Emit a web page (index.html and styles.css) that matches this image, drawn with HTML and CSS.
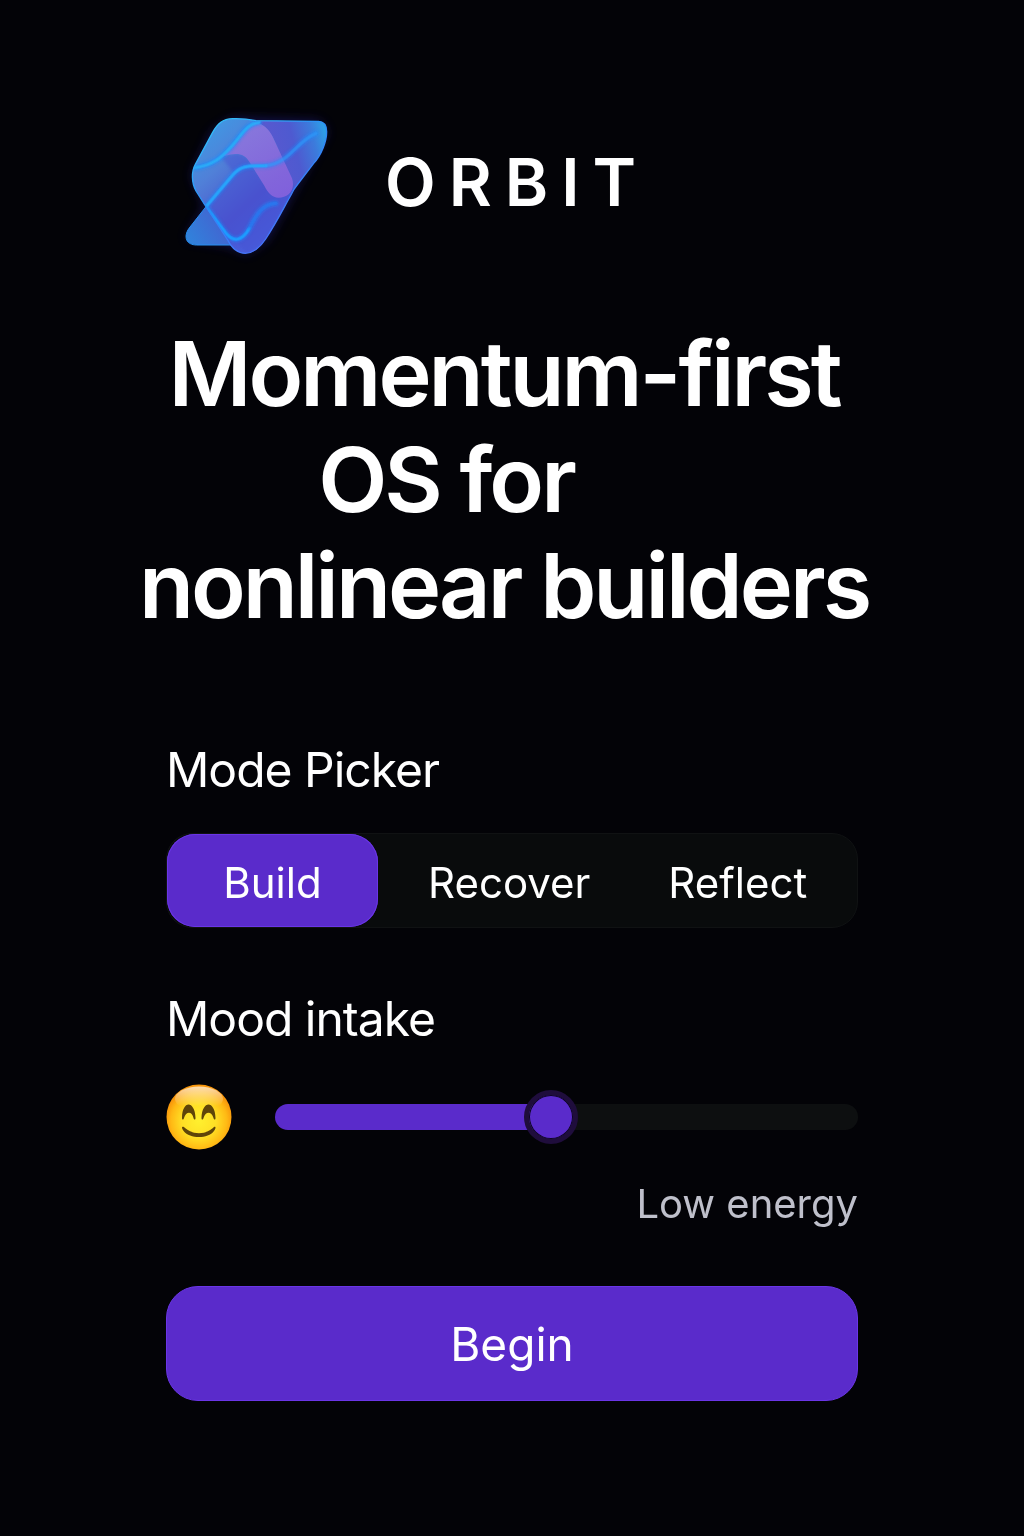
FILE: index.html
```html
<!DOCTYPE html>
<html lang="en">
<head>
<meta charset="utf-8">
<meta name="viewport" content="width=device-width, initial-scale=1">
<title>Orbit</title>
<link rel="stylesheet" href="styles.css">
</head>
<body>
<main class="page">
  <header class="brand">
    <svg class="brand-logo" viewBox="0 0 555 540" aria-hidden="true">
      <defs>
        <linearGradient id="body" x1="90" y1="90" x2="400" y2="440" gradientUnits="userSpaceOnUse">
          <stop offset="0" stop-color="#3c9ee6"/>
          <stop offset=".3" stop-color="#5080d8"/>
          <stop offset=".6" stop-color="#4c52cc"/>
          <stop offset="1" stop-color="#4568ea"/>
        </linearGradient>
        <linearGradient id="wing" x1="290" y1="180" x2="483" y2="130" gradientUnits="userSpaceOnUse">
          <stop offset="0" stop-color="#5b58cf"/>
          <stop offset=".5" stop-color="#4e5ad0"/>
          <stop offset=".8" stop-color="#3c7bdc"/>
          <stop offset="1" stop-color="#2d9fe8"/>
        </linearGradient>
        <linearGradient id="tail" x1="70" y1="450" x2="190" y2="380" gradientUnits="userSpaceOnUse">
          <stop offset="0" stop-color="#3083dc"/>
          <stop offset="1" stop-color="#4560cf"/>
        </linearGradient>
        <linearGradient id="fold" x1="230" y1="100" x2="350" y2="300" gradientUnits="userSpaceOnUse">
          <stop offset="0" stop-color="#8c76dc"/>
          <stop offset="1" stop-color="#8562dc"/>
        </linearGradient>
        <linearGradient id="rim" x1="90" y1="80" x2="340" y2="460" gradientUnits="userSpaceOnUse">
          <stop offset="0" stop-color="#35c9fa"/>
          <stop offset=".5" stop-color="#2b8cf8"/>
          <stop offset="1" stop-color="#4a70fa"/>
        </linearGradient>
        <filter id="halo" x="-30%" y="-30%" width="160%" height="160%"><feGaussianBlur stdDeviation="18"/></filter>
        <filter id="soft" x="-20%" y="-20%" width="140%" height="140%"><feGaussianBlur stdDeviation="4"/></filter>
        <filter id="line" x="-20%" y="-20%" width="140%" height="140%"><feGaussianBlur stdDeviation="2"/></filter>
        <clipPath id="outline">
          <path d="M200 71C170 72 155 85 140 112L88 208C76 230 76 262 90 288L120 335L185 435C200 465 222 475 238 475C266 474 284 455 299 432C333 380 355 335 375 300C382 283 388 276 398 264L443 205C466 180 482 140 482 110C482 90 474 80 458 79L270 77C245 72 225 70 200 71Z"/>
        </clipPath>
      </defs>
      <path d="M200 71L140 112L80 240L120 335L62 430L190 450L242 475L303 432L390 275L483 110L458 79Z" fill="#2b25b8" opacity=".45" filter="url(#halo)"/>
      <path d="M120 335L69 400C51 426 61 450 92 450L198 450Z" fill="url(#tail)" stroke="#268ff2" stroke-width="3"/>
      <g clip-path="url(#outline)">
        <rect width="555" height="540" fill="url(#body)"/>
        <path d="M265 60H500V230L385 280C382 265 335 150 320 125C306 102 290 82 265 84Z" fill="url(#wing)"/>
        <path d="M165 187C210 170 235 175 250 200L295 272C308 300 325 309 340 308L385 275L300 440L242 475L120 335L205 235Z" fill="#4653d2" opacity=".5" filter="url(#soft)"/>
        <path d="M265 84C290 82 310 105 320 125L378 250C390 285 365 308 338 308C318 308 305 292 295 272L250 200C235 175 210 170 165 187C205 160 235 105 265 84Z" fill="url(#fold)" opacity=".92"/>
        <g fill="none" stroke="#168cff" stroke-width="16" stroke-linecap="round" opacity=".7" filter="url(#soft)">
          <path d="M88 218C140 210 165 190 200 150C230 115 245 85 280 82"/>
          <path d="M120 335L200 240C230 205 260 215 300 212C370 205 390 140 450 115" opacity=".8"/>
          <path d="M120 335L180 415C205 445 230 435 250 400C270 360 290 325 330 325" opacity=".8"/>
        </g>
        <g fill="none" stroke-linecap="round" stroke-width="9" filter="url(#line)">
          <path d="M88 218C140 210 165 190 200 150C230 115 245 85 280 82" stroke="#2bb4f8" opacity=".75"/>
          <path d="M120 335L200 240C230 205 260 215 300 212" stroke="#28a5fb"/>
          <path d="M300 212C370 205 390 140 450 115" stroke="#349dfa" opacity=".5"/>
          <path d="M120 335L180 415C205 445 230 435 250 400" stroke="#1c9cff"/>
          <path d="M250 400C270 360 290 325 330 325" stroke="#267cf2" opacity=".5"/>
        </g>
      </g>
      <path d="M200 71C170 72 155 85 140 112L88 208C76 230 76 262 90 288L120 335L185 435C200 465 222 475 238 475C266 474 284 455 299 432C333 380 355 335 375 300C382 283 388 276 398 264L443 205C466 180 482 140 482 110C482 90 474 80 458 79L270 77C245 72 225 70 200 71Z" fill="none" stroke="url(#rim)" stroke-width="4"/>
    </svg>
    <span class="brand-name">ORBIT</span>
  </header>

  <h1 class="headline">
    <span class="headline-line">Momentum-first</span>
    <span class="headline-line headline-line-short">OS for</span>
    <span class="headline-line">nonlinear builders</span>
  </h1>

  <form class="intake">
    <fieldset class="mode">
      <legend class="label">Mode Picker</legend>
      <div class="segments">
        <label class="segment"><input class="segment-input" type="radio" name="mode" value="build" checked>Build</label>
        <label class="segment segment-middle"><input class="segment-input" type="radio" name="mode" value="recover">Recover</label>
        <label class="segment segment-last"><input class="segment-input" type="radio" name="mode" value="reflect">Reflect</label>
      </div>
    </fieldset>

    <div class="mood">
      <label class="label" for="mood">Mood intake</label>
      <div class="mood-row">
        <svg class="mood-face" viewBox="0 0 66 66" aria-hidden="true">
          <defs>
            <radialGradient id="face" cx="33" cy="37" r="34" gradientUnits="userSpaceOnUse">
              <stop offset="0" stop-color="#fff02e"/>
              <stop offset=".5" stop-color="#ffdf25"/>
              <stop offset=".82" stop-color="#ffb914"/>
              <stop offset="1" stop-color="#f8960b"/>
            </radialGradient>
            <linearGradient id="shine" x1="0" y1="2" x2="0" y2="22" gradientUnits="userSpaceOnUse">
              <stop offset="0" stop-color="#fff" stop-opacity=".7"/>
              <stop offset="1" stop-color="#fff" stop-opacity="0"/>
            </linearGradient>
          </defs>
          <circle cx="33" cy="33" r="32.500" fill="url(#face)"/>
          <ellipse cx="33" cy="15" rx="24" ry="12.500" fill="url(#shine)"/>
          <path d="M16 34C16 16 29 16 29.500 34C29.500 36 28 36 27.500 34C26 27 20 27 18 34C17.500 36 16 36 16 34ZM35.500 34C36 16 49 16 49.500 34C49.500 36 48 36 47.500 34C45.500 27 39.500 27 37.500 34C37 36 35.500 36 35.500 34Z" fill="#5f4509"/>
          <path d="M16 44C16 42 18 43 19 44C27 51 39 51 47 44C48 43 49.500 42 49.500 44C46 56 20 56 16 44Z" fill="#5f4509"/>
        </svg>
        <input class="slider" id="mood" type="range" min="0" max="100" value="47" style="--value: 0.47">
      </div>
      <output class="mood-value" for="mood">Low energy</output>
    </div>

    <button class="begin" type="button">Begin</button>
  </form>
</main>
</body>
</html>
```

FILE: styles.css
```css
:root {
  --accent: #5a2bcb;
  --accent-edge: #6a35e6;
  --surface: #090b0c;
}

* {
  box-sizing: border-box;
}

body {
  margin: 0;
  min-height: 100vh;
  background: #030307;
  color: #fff;
  font-family: Inter, "Liberation Sans", sans-serif;
}

.page {
  max-width: 692px;
  margin: 0 auto;
  padding: 95px 0 135px;
}

.brand {
  display: flex;
  align-items: center;
  gap: 34px;
}

.brand-logo {
  width: 185px;
  height: 180px;
  flex: none;
}

.brand-name {
  padding-bottom: 6px;
  font-size: 66px;
  font-weight: 600;
  line-height: 80px;
  letter-spacing: 13px;
}

.headline {
  margin: 46px 16px 0 0;
  font-size: 90px;
  font-weight: 600;
  line-height: 106px;
  letter-spacing: -3px;
  white-space: nowrap;
}

.headline-line {
  display: flex;
  justify-content: center;
}

.headline-line-short {
  padding-right: 116px;
}

.intake {
  display: flex;
  flex-direction: column;
  margin-top: 101px;
}

.mode {
  margin: 0;
  padding: 0;
  border: 0;
  min-width: 0;
}

.label {
  display: block;
  padding: 0;
  font-size: 48px;
  line-height: 60px;
  letter-spacing: -1px;
}

.segments {
  display: flex;
  margin-top: 33px;
  height: 95px;
  border: 1px solid #101213;
  border-radius: 26px;
  background: var(--surface);
}

.segment {
  display: flex;
  align-items: center;
  justify-content: center;
  flex: 0 0 211px;
  padding-top: 4px;
  border-radius: 28px;
  font-size: 42px;
  line-height: 54px;
}

.segment:has(:checked) {
  background: var(--accent);
  box-shadow: inset 0 0 0 1px var(--accent-edge);
}

.segment-middle {
  flex: 0 0 auto;
  padding-right: 39px;
  padding-left: 50px;
}

.segment-last {
  flex: 0 0 auto;
  padding-right: 50px;
  padding-left: 39px;
}

.segment-input {
  position: absolute;
  opacity: 0;
}

.mood {
  display: flex;
  flex-direction: column;
  margin-top: 61px;
}

.mood-row {
  display: flex;
  align-items: center;
  gap: 43px;
  margin-top: 35px;
}

.mood-face {
  width: 66px;
  height: 66px;
  flex: none;
}

.slider {
  flex: 1;
  min-width: 0;
  height: 54px;
  margin: 0;
  background: none;
  appearance: none;
}

.slider::-webkit-slider-runnable-track {
  height: 26px;
  border-radius: 13px;
  background: linear-gradient(to right, var(--accent) calc(27px + (100% - 54px) * var(--value)), #0d0f10 0);
}

.slider::-webkit-slider-thumb {
  width: 54px;
  height: 54px;
  margin-top: -14px;
  border: 5px solid #1f0d3c;
  border-radius: 50%;
  background: var(--accent) padding-box;
  box-shadow: inset 0 0 0 1px #0c0520;
  appearance: none;
}

.mood-value {
  margin-top: 28px;
  align-self: flex-end;
  color: #bfc0cb;
  font-size: 40px;
  line-height: 52px;
}

.begin {
  height: 115px;
  margin-top: 56px;
  border: 1px solid var(--accent-edge);
  border-radius: 32px;
  background: var(--accent);
  color: #fff;
  font: 400 46px/58px Inter, "Liberation Sans", sans-serif;
}
```
